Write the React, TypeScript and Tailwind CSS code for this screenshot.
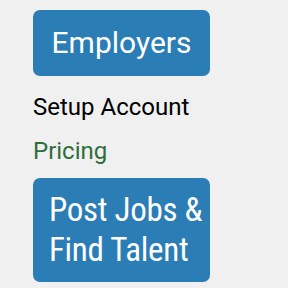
export default function App() {
  return (
    <div className="w-[288px] h-[288px] bg-[#f0f0f0] overflow-hidden">
      <div className="flex flex-col items-start pl-[33px] pt-[10px]">
        <a className="w-[177px] h-[66px] rounded-[7px] bg-[#2a7db5] text-white flex items-center justify-center font-['Roboto',sans-serif] text-[30px] leading-none">
          <span>Employers</span>
        </a>
        <a className="mt-[17px] text-black font-['Roboto',sans-serif] text-[24px] leading-[28px]">
          Setup Account
        </a>
        <a className="mt-[16px] text-[#2e6e3c] font-['Roboto',sans-serif] text-[24px] leading-[28px]">
          Pricing
        </a>
        <a className="mt-[13px] w-[177px] h-[104px] rounded-[7px] bg-[#2a7db5] text-white flex items-center pl-[16px] font-['Roboto_Condensed',sans-serif] text-[33px] leading-[40px] tracking-[-0.3px]">
          <span>
            Post Jobs &amp;
            <br />
            Find Talent
          </span>
        </a>
      </div>
    </div>
  );
}
